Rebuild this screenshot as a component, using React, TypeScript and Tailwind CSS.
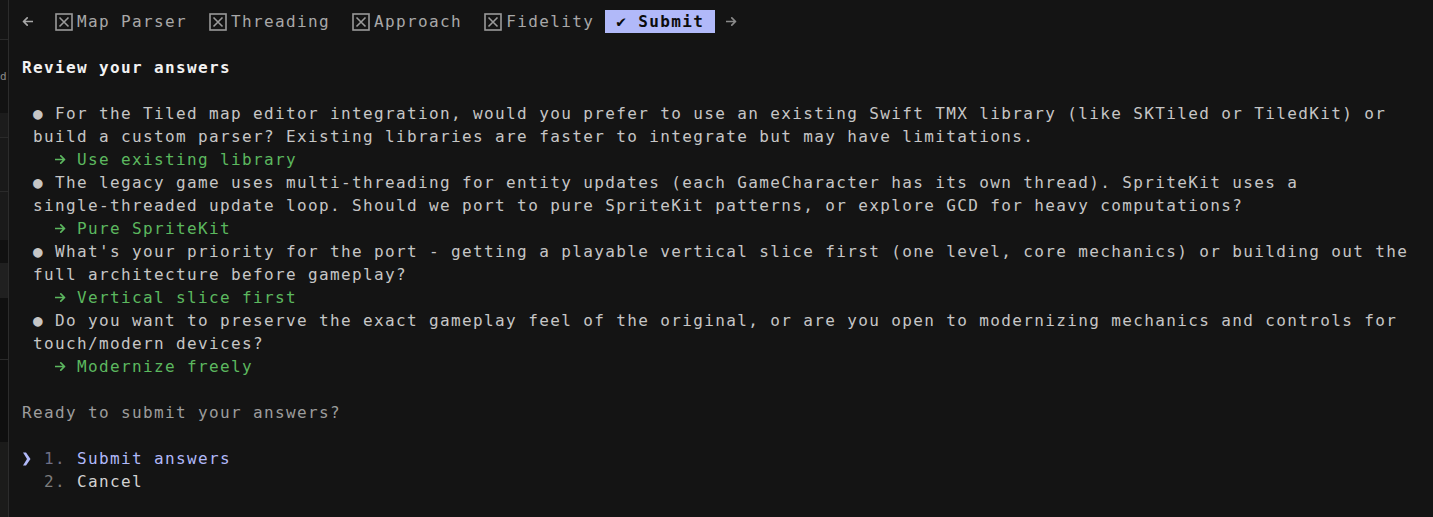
import React from "react";

const mono = "font-['DejaVu_Sans_Mono','Liberation_Mono',monospace]";

const qa = [
  {
    q: [
      "● For the Tiled map editor integration, would you prefer to use an existing Swift TMX library (like SKTiled or TiledKit) or",
      "build a custom parser? Existing libraries are faster to integrate but may have limitations.",
    ],
    a: "Use existing library",
  },
  {
    q: [
      "● The legacy game uses multi-threading for entity updates (each GameCharacter has its own thread). SpriteKit uses a",
      "single-threaded update loop. Should we port to pure SpriteKit patterns, or explore GCD for heavy computations?",
    ],
    a: "Pure SpriteKit",
  },
  {
    q: [
      "● What's your priority for the port - getting a playable vertical slice first (one level, core mechanics) or building out the",
      "full architecture before gameplay?",
    ],
    a: "Vertical slice first",
  },
  {
    q: [
      "● Do you want to preserve the exact gameplay feel of the original, or are you open to modernizing mechanics and controls for",
      "touch/modern devices?",
    ],
    a: "Modernize freely",
  },
];

const CheckBox = () => (
  <span className="inline-flex w-[22px] h-[23px] items-center align-top">
    <svg width="18" height="18" viewBox="0 0 18 18" className="text-[#9a9a9a]">
      <rect x="1" y="1" width="16" height="16" fill="none" stroke="currentColor" strokeWidth="1.6" />
      <path d="M4.5 4.5 L13.5 13.5 M13.5 4.5 L4.5 13.5" stroke="currentColor" strokeWidth="1.6" />
    </svg>
  </span>
);

// one column wide arrow, drawn since the font's arrow is tiny
const Arrow = ({ left = false, className = "" }: { left?: boolean; className?: string }) => (
  <span className={`inline-flex w-[11px] h-[23px] items-center align-top ${className}`}>
    <svg width="11" height="11" viewBox="0 0 11 11" className={left ? "rotate-180" : ""}>
      <path
        d="M0.5 5.5 H9.5 M5.8 1.8 L9.5 5.5 L5.8 9.2"
        fill="none"
        stroke="currentColor"
        strokeWidth="1.7"
        strokeLinecap="round"
        strokeLinejoin="round"
      />
    </svg>
  </span>
);

const Pointer = () => (
  <span className="inline-flex w-[22px] h-[23px] items-center align-top text-[#b1b9f9]">
    <svg width="9" height="14" viewBox="0 0 9 14">
      <path d="M1 0.5 L4 0.5 L8.5 7 L4 13.5 L1 13.5 L5 7 Z" fill="currentColor" />
    </svg>
  </span>
);

const Line = ({ children, className = "" }: { children?: React.ReactNode; className?: string }) => (
  <div className={`h-[23px] leading-[23px] whitespace-pre ${className}`}>{children}</div>
);

const SideStrip = () => (
  <div className="w-[9px] shrink-0 flex flex-col border-r border-[#2c2c2c] overflow-hidden">
    <div className="h-[40px] bg-[#151515] border-b border-[#2a2a2a]" />
    <div className="h-[73px] bg-[#121212] flex items-center justify-start">
      <span className={`${mono} text-[11px] text-[#8a8a8a] leading-none`}>d</span>
    </div>
    <div className="h-[25px] bg-[#1c1c1c] border-b border-[#2a2a2a]" />
    <div className="h-[54px] bg-[#191919] border-b border-[#2a2a2a]" />
    <div className="h-[48px] bg-[#1a1a1a]" />
    <div className="h-[23px] bg-[#111111]" />
    <div className="h-[35px] bg-[#202020]" />
    <div className="h-[62px] bg-[#101010] border-b border-[#2a2a2a]" />
    <div className="h-[82px] bg-[#0f0f0f]" />
    <div className="flex-1 bg-[#1b1b1a]" />
  </div>
);

export default function App() {
  return (
    <div className="w-[1433px] h-[517px] bg-[#141414] flex overflow-hidden">
      <SideStrip />
      <div className={`${mono} flex-1 pl-[13px] pt-[10px] text-[16px] tracking-[1.37px] text-[#c6c6c6]`}>
        <Line className="text-[#a8a8a8]">
          <Arrow left />
          <span>{"  "}</span>
          <CheckBox />
          <span>{"Map Parser  "}</span>
          <CheckBox />
          <span>{"Threading  "}</span>
          <CheckBox />
          <span>{"Approach  "}</span>
          <CheckBox />
          <span>{"Fidelity "}</span>
          <span className="inline-block bg-[#b1b9f9] text-[#0c0c0c] font-bold">{" ✔ Submit "}</span>
          <span>{" "}</span>
          <Arrow className="text-[#8a8a8a]" />
        </Line>
        <Line />
        <Line className="font-bold text-[#f2f2f2]">Review your answers</Line>
        <Line />
        {qa.map((item, i) => (
          <div key={i} className="pl-[11px]">
            {item.q.map((l, j) => (
              <Line key={j}>{l}</Line>
            ))}
            <Line className="text-[#5cb85f]">
              <span>{"  "}</span>
              <Arrow />
              <span>{" " + item.a}</span>
            </Line>
          </div>
        ))}
        <Line />
        <Line className="text-[#9c9c9c]">Ready to submit your answers?</Line>
        <Line />
        <Line>
          <Pointer />
          <span className="text-[#6e6f86]">{"1. "}</span>
          <span className="text-[#b1b9f9]">Submit answers</span>
        </Line>
        <Line>
          <span className="text-[#7d7d7d]">{"  2. "}</span>
          <span className="text-[#d2d2d2]">Cancel</span>
        </Line>
      </div>
    </div>
  );
}
